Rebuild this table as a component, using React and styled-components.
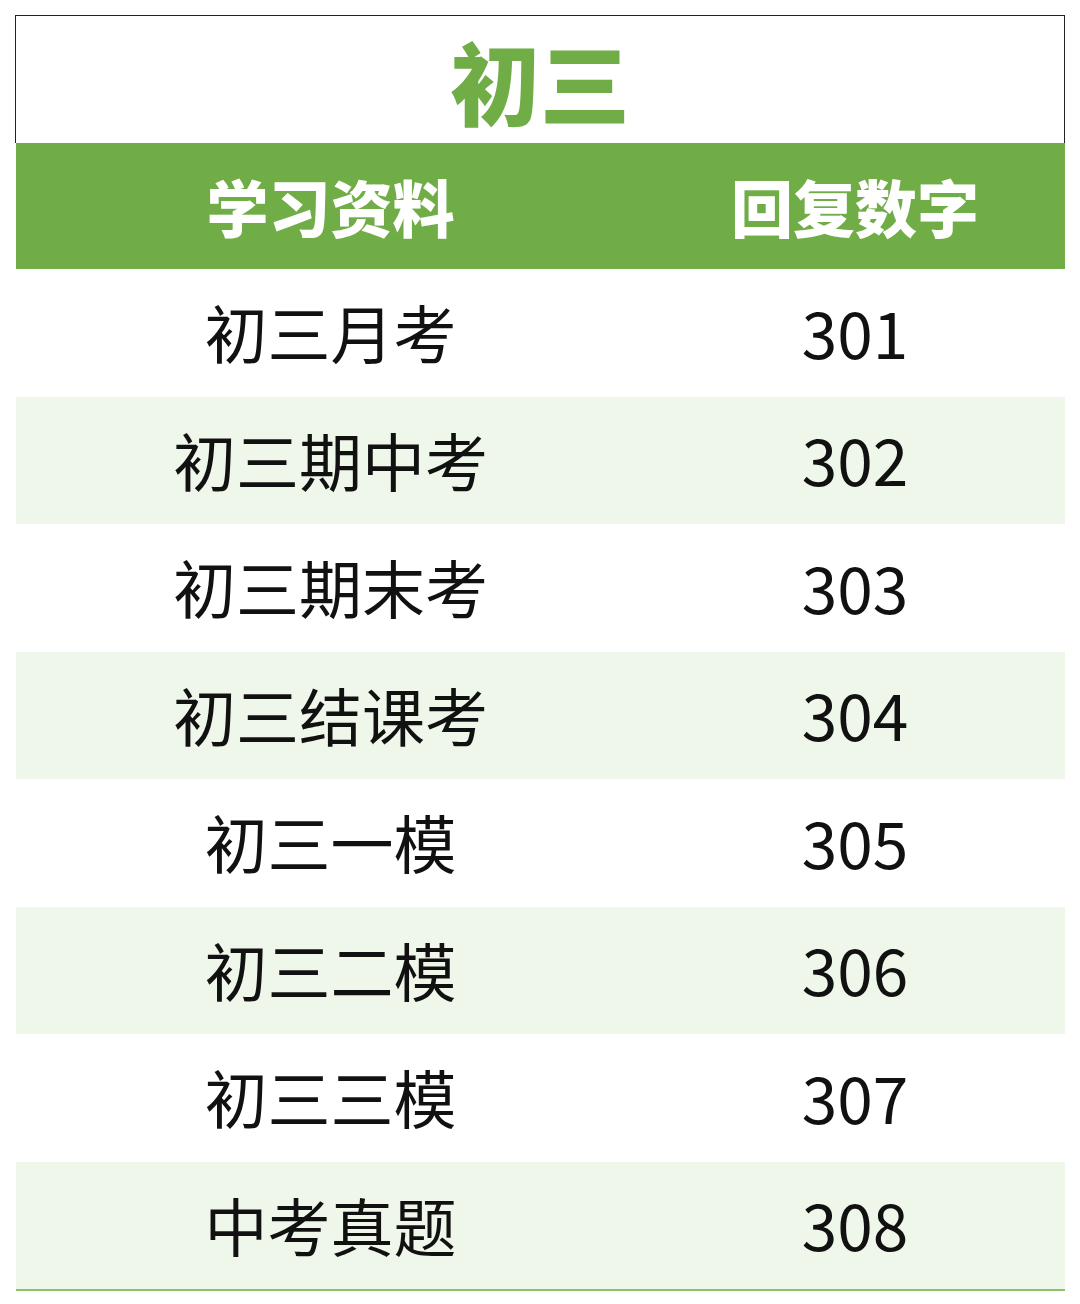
import React from "react";
import styled, { createGlobalStyle } from "styled-components";

const GlobalStyle = createGlobalStyle`
    body, html {
        margin: 0;
        padding: 0;
        background: #ffffff;
    }
    * {
        box-sizing: border-box;
    }
`;

const Page = styled.div`
    padding: 15px 15px 0 15px;
    width: 1080px;
    font-family: "Noto Sans CJK SC", "Noto Sans", sans-serif;
`;

const TitleBox = styled.div`
    height: 128px;
    border: 1.5px solid #222;
    border-bottom: none;
    display: flex;
    align-items: center;
    justify-content: center;
    background: #fff;
`;

const Title = styled.h1`
    margin: 0;
    font-size: 90px;
    font-weight: 900;
    color: #70ad47;
    line-height: 1;
`;

const Table = styled.div`
    display: grid;
    grid-template-columns: 629px 1fr;
    margin-left: 1px;
    border-bottom: 2px solid #8dc06a;
`;

const HeadCell = styled.div`
    height: 126px;
    background: #70ad47;
    color: #fff;
    font-size: 62px;
    font-weight: 900;
    display: flex;
    align-items: center;
    justify-content: center;
`;

const Cell = styled.div`
    height: 127.5px;
    background: ${(p) => (p.$alt ? "#eff7ea" : "#ffffff")};
    color: #111;
    font-size: ${(p) => (p.$num ? "64px" : "63px")};
    font-weight: 400;
    display: flex;
    align-items: center;
    justify-content: center;
    padding-bottom: 4px;
`;

const rows = [
    ["初三月考", "301"],
    ["初三期中考", "302"],
    ["初三期末考", "303"],
    ["初三结课考", "304"],
    ["初三一模", "305"],
    ["初三二模", "306"],
    ["初三三模", "307"],
    ["中考真题", "308"],
];

const App = () => {
    return (
        <>
            <GlobalStyle />
            <Page>
                <TitleBox>
                    <Title>初三</Title>
                </TitleBox>
                <Table>
                    <HeadCell>学习资料</HeadCell>
                    <HeadCell>回复数字</HeadCell>
                    {rows.map(([name, code], i) => (
                        <React.Fragment key={code}>
                            <Cell $alt={i % 2 === 1}>{name}</Cell>
                            <Cell $alt={i % 2 === 1} $num>{code}</Cell>
                        </React.Fragment>
                    ))}
                </Table>
            </Page>
        </>
    );
};

export default App;
